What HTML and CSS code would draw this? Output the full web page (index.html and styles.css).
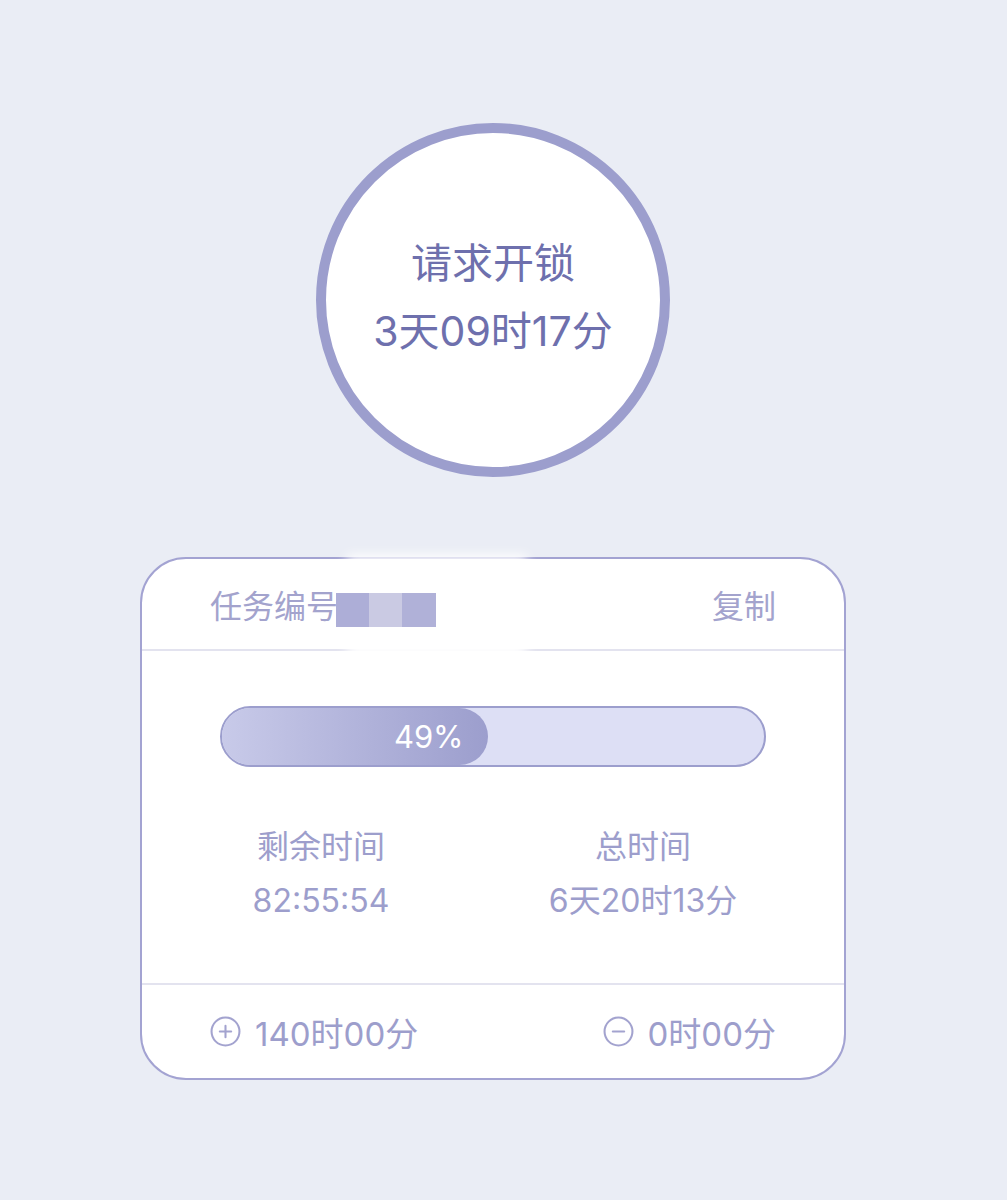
FILE: index.html
```html
<!DOCTYPE html>
<html lang="zh-CN">
<head>
    <meta charset="UTF-8">
    <meta name="viewport" content="width=device-width, initial-scale=1.0">
    <title>请求开锁</title>
    <link rel="stylesheet" href="styles.css">
</head>
<body>
    <div class="page">
        <div class="lock-circle">
            <div class="lock-title">请求开锁</div>
            <div class="lock-time">3天09时17分</div>
        </div>

        <div class="task-card">
            <div class="task-head">
                <div class="task-id">
                    <span>任务编号</span>
                    <span class="mask">
                        <i class="m1"></i><i class="m2"></i><i class="m3"></i>
                    </span>
                </div>
                <span class="copy">复制</span>
            </div>
            <div class="mask-glow"></div>

            <div class="progress-wrap">
                <div class="progress">
                    <div class="progress-fill" style="width: 49%">49%</div>
                </div>
            </div>

            <div class="stats">
                <div class="stat">
                    <div class="stat-label">剩余时间</div>
                    <div class="stat-value">82:55:54</div>
                </div>
                <div class="stat">
                    <div class="stat-label">总时间</div>
                    <div class="stat-value">6天20时13分</div>
                </div>
            </div>

            <div class="task-foot">
                <div class="foot-item">
                    <svg class="foot-icon" viewBox="0 0 30 30">
                        <circle cx="15" cy="15" r="13.5" fill="none" stroke="currentColor" stroke-width="2"/>
                        <path d="M15 9.5v11M9.5 15h11" stroke="currentColor" stroke-width="2" stroke-linecap="round"/>
                    </svg>
                    <span>140时00分</span>
                </div>
                <div class="foot-item">
                    <svg class="foot-icon" viewBox="0 0 30 30">
                        <circle cx="15" cy="15" r="13.5" fill="none" stroke="currentColor" stroke-width="2"/>
                        <path d="M9.5 15h11" stroke="currentColor" stroke-width="2" stroke-linecap="round"/>
                    </svg>
                    <span>0时00分</span>
                </div>
            </div>
        </div>
    </div>
</body>
</html>
```

FILE: styles.css
```css
body {
    margin: 0;
    background-color: #eaedf5;
    font-family: Inter, "Noto Sans CJK SC", sans-serif;
    color: #9d9ecc;
}
.page {
    width: 706px;
    margin-left: 140px;
    padding-top: 123px;
    padding-bottom: 100px;
}
.lock-circle {
    width: 354px;
    height: 354px;
    box-sizing: border-box;
    margin: 0 auto;
    border: 10px solid #9c9ecd;
    border-radius: 50%;
    background-color: #fff;
    color: #6e70ad;
    display: flex;
    flex-direction: column;
    align-items: center;
    justify-content: center;
    padding-bottom: 6px;
}
.lock-title,
.lock-time {
    font-size: 41px;
    line-height: 68px;
}
.task-card {
    position: relative;
    margin-top: 80px;
    background-color: #fff;
    border: 2px solid #a3a3d2;
    border-radius: 46px;
}
/* soft white patch left around the blurred task number */
.mask-glow {
    position: absolute;
    left: 205px;
    top: -4px;
    width: 180px;
    height: 102px;
    background-color: #fff;
    filter: blur(6px);
}
.task-head {
    height: 90px;
    padding: 0 68px;
    display: flex;
    align-items: center;
    justify-content: space-between;
    border-bottom: 2px solid #e3e3ef;
    font-size: 32px;
    color: #a3a3cd;
}
.task-id {
    display: flex;
    align-items: center;
}
.mask {
    position: relative;
    z-index: 1;
    display: flex;
    margin-left: -2px;
    margin-top: 12px;
}
.mask i {
    display: block;
    width: 33px;
    height: 34px;
}
.mask .m1 {
    background-color: #adaed7;
}
.mask .m2 {
    background-color: #cacae3;
}
.mask .m3 {
    background-color: #b0b1d8;
    width: 34px;
}
.progress-wrap {
    position: relative;
    padding: 55px 78px 0;
}
.progress {
    height: 61px;
    box-sizing: border-box;
    border: 2px solid #9c9ecd;
    border-radius: 31px;
    background-color: #dddff5;
    overflow: hidden;
}
.progress-fill {
    height: 100%;
    box-sizing: border-box;
    background: linear-gradient(to right, #c8cae9, #9c9ecd);
    border-radius: 0 30px 30px 0;
    color: #fff;
    font-size: 31px;
    line-height: 57px;
    text-align: right;
    padding-right: 24px;
}
.stats {
    display: grid;
    grid-template-columns: 1fr 1fr;
    padding: 53px 40px 55px 18px;
    border-bottom: 2px solid #e3e3ef;
    text-align: center;
}
.stat-label,
.stat-value {
    font-size: 32px;
    line-height: 54px;
}
.task-foot {
    height: 93px;
    padding: 0 68px;
    display: flex;
    align-items: center;
    justify-content: space-between;
    font-size: 33px;
}
.foot-item {
    display: flex;
    align-items: center;
    gap: 14px;
}
.foot-icon {
    width: 31px;
    height: 31px;
    color: #a3a3cf;
}
```
